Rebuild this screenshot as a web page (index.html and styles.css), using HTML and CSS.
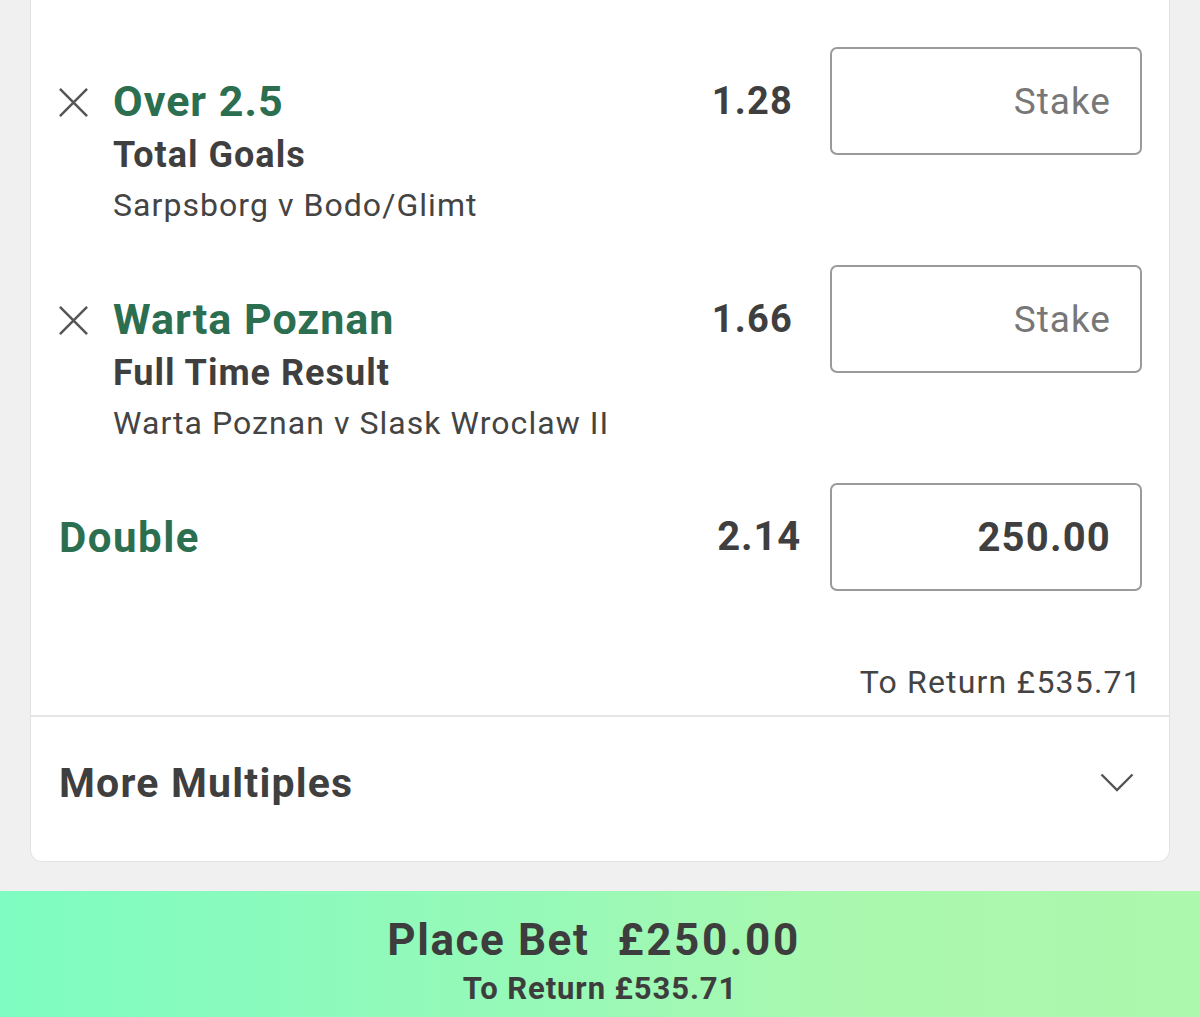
FILE: index.html
```html
<!DOCTYPE html>
<html>
<head>
<meta charset="utf-8">
<link rel="stylesheet" href="styles.css">
</head>
<body>
<div class="page">
  <div class="card">
    <div class="sel">
      <div class="left">
        <svg class="x" viewBox="0 0 32 32" width="32" height="32"><path d="M2 2 L30 30 M30 2 L2 30" stroke="#555" stroke-width="2.6" fill="none"/></svg>
        <div class="info">
          <div class="title">Over 2.5</div>
          <div class="market">Total Goals</div>
          <div class="event">Sarpsborg v Bodo/Glimt</div>
        </div>
      </div>
      <div class="odds">1.28</div>
      <div class="stake placeholder">Stake</div>
    </div>
    <div class="sel">
      <div class="left">
        <svg class="x" viewBox="0 0 32 32" width="32" height="32"><path d="M2 2 L30 30 M30 2 L2 30" stroke="#555" stroke-width="2.6" fill="none"/></svg>
        <div class="info">
          <div class="title">Warta Poznan</div>
          <div class="market">Full Time Result</div>
          <div class="event">Warta Poznan v Slask Wroclaw II</div>
        </div>
      </div>
      <div class="odds">1.66</div>
      <div class="stake placeholder">Stake</div>
    </div>
    <div class="multi">
      <div class="multi-name">Double</div>
      <div class="odds odds-multi">2.14</div>
      <div class="stake filled">250.00</div>
    </div>
    <div class="return">To Return £535.71</div>
    <div class="more">
      <div class="more-label">More Multiples</div>
      <svg class="chev" viewBox="0 0 34 20" width="34" height="20"><path d="M1.5 1.5 L17 17 L32.5 1.5" stroke="#555" stroke-width="2.4" fill="none"/></svg>
    </div>
  </div>
  <div class="place">
    <div class="place-main"><span>Place Bet</span><span class="amt">£250.00</span></div>
    <div class="place-sub">To Return £535.71</div>
  </div>
</div>
</body>
</html>
```
FILE: styles.css
```css
html, body {
  margin: 0;
  padding: 0;
  background: #f0f0f0;
  font-family: Roboto, "Liberation Sans", sans-serif;
  color: #3f3f3f;
}
.page {
  width: 1200px;
  height: 1017px;
  overflow: hidden;
  display: flex;
  flex-direction: column;
}
.card {
  flex: none;
  margin: 0 30px;
  background: #fff;
  border: 1px solid #e3e3e3;
  border-top: none;
  border-radius: 0 0 12px 12px;
  padding-top: 47px;
  height: 862px;
  box-sizing: border-box;
  display: flex;
  flex-direction: column;
}
.sel {
  flex: none;
  display: flex;
  align-items: flex-start;
  padding: 0 27px 0 27px;
  height: 218px;
}
.left {
  flex: 1;
  display: flex;
  align-items: flex-start;
}
.x {
  margin-top: 40px;
  width: 31px;
  height: 31px;
  flex: none;
}
.info {
  margin-left: 24px;
  padding-top: 27px;
}
.title {
  font-size: 43px;
  line-height: 54px;
  font-weight: 700;
  letter-spacing: 1px;
  color: #2c6e50;
}
.market {
  font-size: 36px;
  line-height: 54px;
  font-weight: 700;
  letter-spacing: 1px;
  color: #3f3f3f;
}
.event {
  font-size: 32px;
  line-height: 46px;
  letter-spacing: 1.05px;
  color: #444;
}
.odds {
  margin-top: 27px;
  line-height: 54px;
  font-size: 38px;
  font-weight: 700;
  letter-spacing: 1.2px;
  color: #3f3f3f;
  margin-right: 37px;
}
.stake {
  width: 312px;
  height: 108px;
  box-sizing: border-box;
  border: 2.5px solid #9a9a9a;
  border-radius: 7px;
  display: flex;
  align-items: center;
  justify-content: flex-end;
  padding-right: 29px;
  flex: none;
}
.placeholder {
  font-size: 37px;
  letter-spacing: 1px;
  color: #777;
}
.filled {
  font-size: 40px;
  font-weight: 700;
  letter-spacing: 1.2px;
  color: #3f3f3f;
}
.multi {
  flex: none;
  display: flex;
  align-items: center;
  padding: 0 27px 0 28px;
  height: 108px;
}
.multi-name {
  flex: 1;
  font-size: 42px;
  font-weight: 700;
  letter-spacing: 1.5px;
  color: #2c6e50;
}
.odds-multi {
  margin-top: 0;
  font-size: 40px;
  letter-spacing: 0.8px;
  margin-right: 29px;
}
.return {
  flex: none;
  margin-top: 68px;
  text-align: right;
  padding-right: 27px;
  font-size: 32px;
  line-height: 46px;
  letter-spacing: 1.2px;
  padding-bottom: 10px;
  border-bottom: 2px solid #e6e6e6;
  color: #444;
}
.more {
  flex: 1;
  display: flex;
  align-items: center;
  justify-content: space-between;
  padding: 0 35px 12px 28px;
}
.more-label {
  font-size: 41px;
  font-weight: 700;
  letter-spacing: 1.2px;
  color: #3f3f3f;
}
.chev {
  margin-top: 0;
}
.place {
  margin-top: 29px;
  flex: 1;
  background: linear-gradient(90deg, #7efcc1 0%, #97f9b8 45%, #aaf8af 70%, #acf9ad 100%);
  text-align: center;
  color: #3d3d3d;
  font-weight: 700;
}
.place-main {
  font-size: 44px;
  line-height: 50px;
  margin-top: 24px;
  letter-spacing: 1.6px;
  padding-right: 12px;
}
.place-main .amt {
  margin-left: 28px;
  letter-spacing: 2.6px;
}
.place-sub {
  font-size: 31px;
  line-height: 36px;
  margin-top: 6px;
  letter-spacing: 0.9px;
}
```
